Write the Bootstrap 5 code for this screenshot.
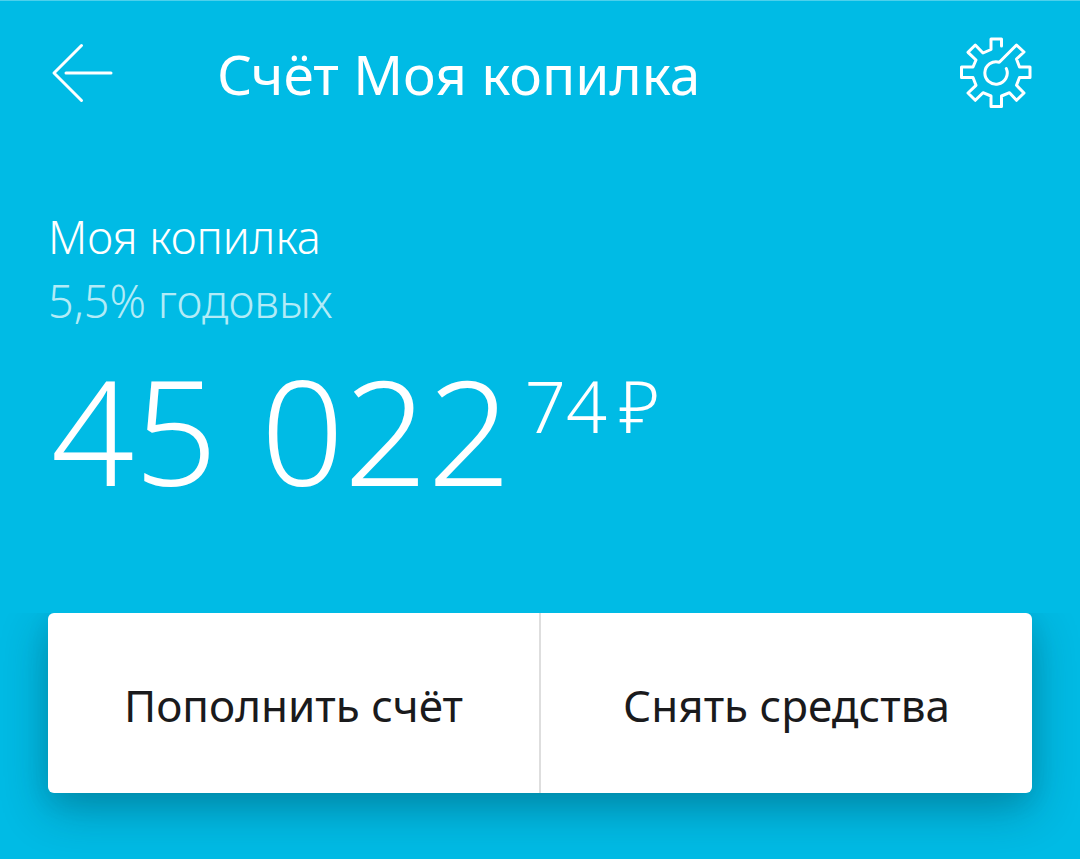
<!DOCTYPE html>
<html lang="ru">
<head>
<meta charset="utf-8">
<meta name="viewport" content="width=device-width, initial-scale=1">
<title>Счёт Моя копилка</title>
<link href="https://cdn.jsdelivr.net/npm/bootstrap@5.3.0/dist/css/bootstrap.min.css" rel="stylesheet">
<style>
body { background: #00bbe5; color: #fff; font-family: "Noto Sans", "Open Sans", sans-serif; }
.top-bar { border-top: 1px solid #4dd0ec; padding: 36px 48px 0; }
.icon-btn { color: inherit; line-height: 0; }
.icon-btn svg { fill: none; stroke: currentColor; stroke-width: 3; stroke-linejoin: round; stroke-linecap: round; }
.top-title { font-size: 55px; line-height: 72px; margin-left: 103px; padding-top: 1px; font-weight: 400; }
.account { padding: 95px 48px 99px; font-weight: 300; }
.account-name, .account-rate { font-size: 45px; line-height: 64px; font-weight: 300; }
.account-rate { color: #b2ebf7; }
.amount { font-size: 146px; line-height: 168px; margin: 13px 0 0 3px; column-gap: 43px; }
.amount-cents { font-size: 72px; line-height: 88px; column-gap: 12px; margin: 15px 0 0 -29px; }
.actions { padding: 0 48px 66px; overflow: hidden; }
.actions-card { border-radius: 6px; box-shadow: 0 16px 48px rgba(0, 40, 50, .32), 0 8px 24px rgba(0, 40, 50, .08); }
.actions-card .btn { color: #1a1a1c; font-size: 44px; line-height: 64px; padding: 60px 0 56px; border: 0; border-radius: 0; flex: 1 1 0; }
.actions-card .btn + .btn { border-left: 2px solid #dedede; }
</style>
</head>
<body>
<header class="top-bar d-flex align-items-start">
  <button type="button" class="icon-btn btn p-0 border-0" aria-label="Назад">
    <svg width="66" height="72" viewBox="0 0 66 72"><path d="M33.5 8.5 6 36l27.500 27.500M18 36h45"/></svg>
  </button>
  <h1 class="top-title mb-0">Счёт Моя копилка</h1>
  <button type="button" class="icon-btn btn p-0 border-0 ms-auto" aria-label="Настройки">
    <svg width="72" height="72" viewBox="0 0 72 72"><path d="M41.500 9V2H31v10.500L23 16l-7.700-8L8 15.300l8 7.700-3 7H1.500v10.500H13l3 7.800L8 56l7.300 7.300 7.700-7.600 8 3.300v10.500h10.500V59l8-3.300 7 7.600L64 56l-7.500-7.700 3-7.800H70V30H59.500l-3-8L64 15l-7.500-7L39.300 25.300A11.200 11.200 0 1 0 46.300 31.500"/></svg>
  </button>
</header>
<main>
  <section class="account">
    <p class="account-name mb-0">Моя копилка</p>
    <p class="account-rate mb-0">5,5% годовых</p>
    <div class="amount d-flex align-items-start">
      <span>45</span><span>022</span>
      <span class="amount-cents d-flex"><span>74</span><span>₽</span></span>
    </div>
  </section>
  <section class="actions">
    <div class="actions-card bg-white d-flex">
      <button type="button" class="btn">Пополнить счёт</button>
      <button type="button" class="btn">Снять средства</button>
    </div>
  </section>
</main>
<script src="https://cdn.jsdelivr.net/npm/bootstrap@5.3.0/dist/js/bootstrap.bundle.min.js"></script>
</body>
</html>
